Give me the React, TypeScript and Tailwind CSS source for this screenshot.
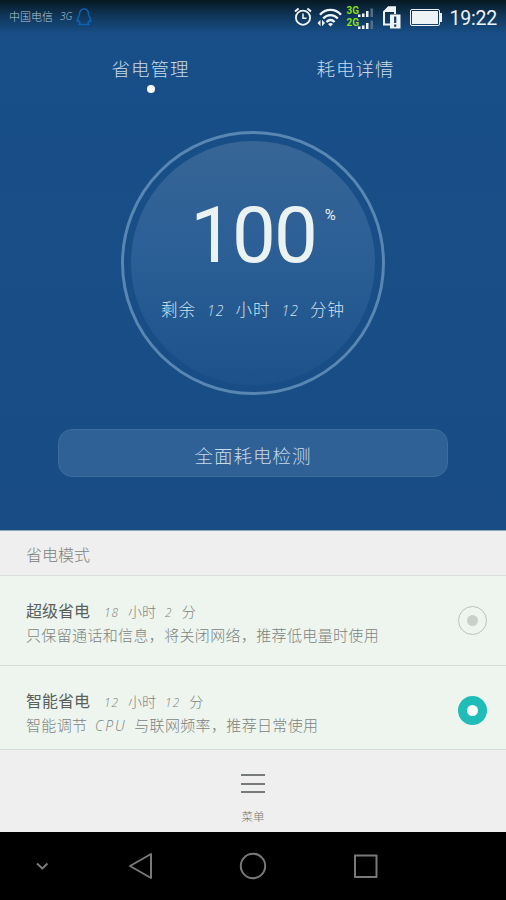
const modes = [
  {
    name: "超级省电",
    time: "18 小时 2 分",
    description: "只保留通话和信息，将关闭网络，推荐低电量时使用",
    active: false,
  },
  {
    name: "智能省电",
    time: "12 小时 12 分",
    description: "智能调节 CPU 与联网频率，推荐日常使用",
    active: true,
  },
];

function AlarmIcon() {
  return (
    <svg width="18" height="20" viewBox="0 0 18 20" fill="none" stroke="#eef3f5">
      <circle cx="9" cy="10.7" r="7.1" strokeWidth="1.8" />
      <path d="M9 6.5V11.3H12.5" strokeWidth="1.5" />
      <path d="M1 4.6L4.6 1.6M17 4.6L13.4 1.6" strokeWidth="2" />
    </svg>
  );
}

function WifiIcon() {
  return (
    <svg width="26" height="20" viewBox="0 0 26 20" fill="none" stroke="#eef3f5" strokeWidth="2.3">
      <path d="M3 7.8C8.5 1.2 18.5 1.2 24 7.8" />
      <path d="M6.2 11.5C10 7 17 7 20.8 11.5" />
      <path d="M9.4 15C12 12.3 15 12.3 17.6 15" />
      <path d="M11 17Q13.5 15.2 16 17L13.5 19.6Z" fill="#eef3f5" stroke="none" />
      <path d="M0.5 16L3.5 12.8V19.2ZM8 16L5 12.8V19.2Z" fill="#eef3f5" stroke="none" />
    </svg>
  );
}

function SignalIcon() {
  return (
    <svg width="17" height="9" viewBox="0 0 17 9" fill="#eef3f5" className="translate-y-px">
      <rect x="0" y="6.5" width="2.5" height="2.5" />
      <rect x="4" y="5.5" width="2.5" height="3.5" />
      <rect x="8" y="3" width="2.5" height="6" />
      <rect x="12.5" y="0.5" width="2.5" height="8.5" fill="#526f88" />
    </svg>
  );
}

function SimIcon() {
  return (
    <svg width="19" height="23" viewBox="0 0 19 23" fill="none">
      <path d="M8 18.5H2V6L6.5 1.5H13V8" stroke="#eef3f5" strokeWidth="2" />
      <path d="M1 6L6 0.5H14V6H1Z" fill="#eef3f5" />
      <rect x="8" y="8.5" width="10.5" height="14" fill="#eef3f5" />
      <path d="M13.2 10.5V17M13.2 18.5V20.7" stroke="#173f66" strokeWidth="2.2" />
    </svg>
  );
}

function PenguinIcon() {
  return (
    <svg width="16" height="18" viewBox="0 0 16 18" fill="none" stroke="#0d60b4" strokeWidth="1.5">
      <path d="M8 1C4.6 1 3.4 3.5 3.4 7C2.2 9.2 0.8 11.5 1.2 13.6L3.4 13.2L4 14.8L3 16.6H13L12 14.8L12.6 13.2L14.8 13.6C15.2 11.5 13.8 9.2 12.6 7C12.6 3.5 11.4 1 8 1Z" />
    </svg>
  );
}

// Splits a duration so that the figures slant and the units stay upright
function Duration({ text, className }: { text: string; className: string }) {
  return (
    <span className={`flex items-baseline whitespace-nowrap ${className}`}>
      {text.split(" ").map((part, index) =>
        /\d/.test(part) ? (
          <i key={index} className="font-['Open_Sans'] text-[0.85em] tracking-[1px]">
            {part}
          </i>
        ) : (
          <span key={index}>{part}</span>
        )
      )}
    </span>
  );
}

function StatusBar() {
  return (
    <header className="flex h-[34px] items-center bg-linear-to-b from-[#071923] via-[#10385d] to-[#184f88] text-[#eef3f5]">
      <span className="ml-[9px] flex w-[67px] gap-[7px] whitespace-nowrap text-[11px] text-[#b3c7d5]">
        中国电信 <i className="font-['Open_Sans'] text-[10px]">3G</i>
      </span>
      <PenguinIcon />
      <div className="ml-auto flex items-center pr-[9px]">
        <AlarmIcon />
        <div className="ml-[5px]">
          <WifiIcon />
        </div>
        <div className="ml-[3px] flex flex-col gap-[2px] font-[Roboto] text-[10px] font-bold leading-[10px] text-[#85df16]">
          <div className="flex items-end">
            <span className="w-3">3G</span>
            <SignalIcon />
          </div>
          <div className="flex items-end">
            <span className="w-3">2G</span>
            <SignalIcon />
          </div>
        </div>
        <div className="ml-[7px]">
          <SimIcon />
        </div>
        <div className="ml-[9px] flex items-center">
          <div className="h-[17px] w-[30px] rounded-[2px] border border-[#eef3f5] p-[1px]">
            <div className="h-full bg-[#eef3f5]" />
          </div>
          <div className="h-[9px] w-[2px] bg-[#eef3f5]" />
        </div>
        <span className="ml-[7px] mt-[3px] font-[Roboto] text-[19.5px] font-normal leading-6 tracking-[-0.2px]">19:22</span>
      </div>
    </header>
  );
}

function PowerGauge() {
  return (
    <div className="mx-auto flex size-[264px] rounded-full border-[3px] border-[#5987b3] p-[7px]">
      <div className="flex w-full flex-col items-center rounded-full bg-linear-to-b from-[#376596] via-[#2b5f96] via-45% to-[#1c528a]">
        <div className="mt-[47px] flex pl-[20px] font-[Roboto] font-normal text-[#eaf2f2]">
          <span className="text-[78px] leading-[96px] tracking-[-2px]">100</span>
          <span className="ml-[9px] mt-[17px] text-[15px] leading-5">%</span>
        </div>
        <Duration
          text="剩余 12 小时 12 分钟"
          className="mt-[14px] gap-[11px] text-[16.5px] leading-6 tracking-[1px] text-[#d2e1ec]"
        />
      </div>
    </div>
  );
}

function Radio({ active }: { active: boolean }) {
  return active ? (
    <span className="flex size-[29px] items-center justify-center rounded-full bg-[#20bdb8]">
      <span className="size-[11px] rounded-full bg-white" />
    </span>
  ) : (
    <span className="flex size-[29px] items-center justify-center rounded-full border border-[#bcc2bc]">
      <span className="size-[11px] rounded-full bg-[#cbcfcb]" />
    </span>
  );
}

export default function App() {
  return (
    <div className="flex h-[900px] w-[506px] flex-col overflow-hidden bg-[#efefef] font-['Liberation_Sans','Noto_Sans_CJK_SC',sans-serif] font-light">
      {/* Battery overview */}
      <section className="h-[530px] bg-linear-to-b from-[#184f88] to-[#194c84]">
        <StatusBar />
        <nav className="flex h-[97px] pl-[48px] pt-[24px] text-[18.5px] leading-6 tracking-[1px] text-[#c7dae8]">
          <div className="flex w-[205px] flex-col items-center">
            <span>省电管理</span>
            <span className="mt-[3px] size-2 rounded-full bg-white" />
          </div>
          <div className="w-[205px] text-center">耗电详情</div>
        </nav>
        <PowerGauge />
        <button className="mx-auto mt-[34px] flex h-12 w-[390px] items-center justify-center rounded-[14px] border border-[#3a6e9c] bg-[#2f6196] pt-[7px] text-[18.5px] tracking-[1px] text-[#c7dae8]">
          全面耗电检测
        </button>
      </section>

      {/* Saving modes */}
      <h2 className="flex h-[46px] items-center border-b border-t border-b-[#d8e0d9] border-t-[#8fa9b9] pl-[26px] pt-[6px] text-[16px] text-[#7c827d]">
        省电模式
      </h2>
      {modes.map((mode, index) => (
        <div
          key={mode.name}
          className={`flex items-center justify-between border-b border-[#d3ddd4] bg-[#eef4ee] pl-[26px] pr-[19px] ${
            index === 0 ? "h-[90px]" : "h-[84px] pt-[6px]"
          }`}
        >
          <div className="mt-[7px] whitespace-nowrap text-[#7c847e]">
            <div className="flex items-baseline leading-6">
              <span className="w-[78px] text-[16px] font-normal text-[#59605b]">{mode.name}</span>
              <Duration text={mode.time} className="gap-[9px] text-[14px]" />
            </div>
            <p className="text-[15px] leading-6 tracking-[0.35px]">
              {mode.description.split("CPU").map((part, i) => (
                <span key={i}>
                  {i > 0 && <i className="mx-[3px] font-['Open_Sans'] text-[14px] tracking-[2px]">CPU</i>}
                  {part}
                </span>
              ))}
            </p>
          </div>
          <Radio active={mode.active} />
        </div>
      ))}

      {/* Menu */}
      <footer className="flex h-[82px] flex-col items-center pt-[24px] text-[#747974]">
        <div className="flex h-[19px] w-6 flex-col justify-between">
          <span className="h-[2px] bg-[#777b77]" />
          <span className="h-[2px] bg-[#777b77]" />
          <span className="h-[2px] bg-[#777b77]" />
        </div>
        <span className="mt-[16px] text-[11.5px] leading-4">菜单</span>
      </footer>

      {/* Android navigation keys */}
      <div className="flex h-[68px] bg-black">
        <svg width="506" height="68" viewBox="0 0 506 68" fill="none" stroke="#777a77" strokeWidth="2" strokeLinejoin="round">
          <path d="M37 31.5L42.3 36.5L47.5 31.5" />
          <path d="M130 34L151 22V46Z" />
          <circle cx="253" cy="34" r="12.2" />
          <rect x="355" y="23.5" width="21.5" height="21.5" />
        </svg>
      </div>
    </div>
  );
}
